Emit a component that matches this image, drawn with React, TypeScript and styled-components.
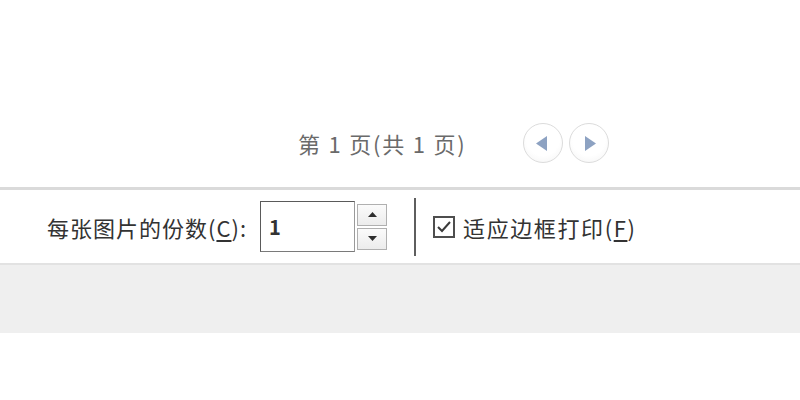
import React from "react";
import styled, { createGlobalStyle } from "styled-components";

const Global = createGlobalStyle`
  html, body { margin: 0; padding: 0; background: #ffffff; }
  body { font-family: "Noto Sans CJK SC", "Noto Sans", sans-serif; }
`;

const Page = styled.div`
  width: 800px;
  height: 400px;
  display: flex;
  flex-direction: column;
  overflow: hidden;
`;

const PreviewArea = styled.div`
  height: 187px;
  display: flex;
  align-items: flex-end;
  padding-left: 298px;
  box-sizing: border-box;
  padding-bottom: 24px;
`;

const Pager = styled.div`
  display: flex;
  align-items: center;
`;

const PageInfo = styled.span`
  font-size: 22px;
  color: #6a6a6a;
  line-height: 40px;
  margin-right: 56px;
  letter-spacing: 1.8px;
`;

const NavButton = styled.div`
  width: 38px;
  height: 38px;
  border-radius: 50%;
  border: 1px solid #dcdcdc;
  background: radial-gradient(circle at 50% 40%, #ffffff 55%, #f2f2f2 100%);
  display: flex;
  align-items: center;
  justify-content: center;
  margin-right: 6px;
`;

const Rule = styled.div<{ $h: number; $c: string }>`
  height: ${(p) => p.$h}px;
  background: ${(p) => p.$c};
  flex-shrink: 0;
`;

const Toolbar = styled.div`
  height: 73px;
  display: flex;
  align-items: center;
  padding-left: 47px;
  box-sizing: border-box;
`;

const Label = styled.label<{ $ls?: number }>`
  font-size: 22px;
  color: #333333;
  letter-spacing: ${(p) => p.$ls ?? 1}px;
  display: flex;
  align-items: center;
`;

const Key = styled.span`
  text-decoration: underline;
  text-underline-offset: 3px;
`;

const NumberBox = styled.div`
  width: 95px;
  height: 51px;
  box-sizing: border-box;
  border: 1px solid #5a5a5a;
  border-right-color: #9a9a9a;
  border-bottom-color: #7a7a7a;
  margin-left: 13px;
  display: flex;
  align-items: center;
  padding-left: 8px;
  font-size: 20px;
  font-weight: 600;
  color: #333;
`;

const Spinner = styled.div`
  display: flex;
  flex-direction: column;
  gap: 2px;
  margin-left: 2px;
`;

const SpinButton = styled.div`
  width: 30px;
  height: 22px;
  box-sizing: border-box;
  border: 1px solid #b0b0b0;
  background: linear-gradient(#fbfbfb, #ececec);
  display: flex;
  align-items: center;
  justify-content: center;
`;

const Separator = styled.div`
  width: 2px;
  height: 58px;
  background: #5e5e5e;
  margin-left: 27px;
  margin-right: 17px;
`;

const CheckBox = styled.div`
  width: 22px;
  height: 22px;
  box-sizing: border-box;
  border: 2px solid #4e4e4e;
  display: flex;
  align-items: center;
  justify-content: center;
  margin-right: 8px;
`;

const Band = styled.div`
  height: 68px;
  background: #efefef;
`;

const Tri = ({ dir, color, w, h }: { dir: "up" | "down" | "left" | "right"; color: string; w: number; h: number }) => {
  const pts =
    dir === "up"
      ? `0,${h} ${w / 2},0 ${w},${h}`
      : dir === "down"
      ? `0,0 ${w},0 ${w / 2},${h}`
      : dir === "left"
      ? `${w},0 ${w},${h} 0,${h / 2}`
      : `0,0 ${w},${h / 2} 0,${h}`;
  return (
    <svg width={w} height={h} viewBox={`0 0 ${w} ${h}`}>
      <polygon points={pts} fill={color} />
    </svg>
  );
};

const Nudge = styled.span<{ $x: number }>`
  display: flex;
  margin-left: ${(p) => p.$x}px;
`;

export default function App() {
  return (
    <Page>
      <Global />
      <PreviewArea>
        <Pager>
          <PageInfo>第 1 页(共 1 页)</PageInfo>
          <NavButton>
            <Nudge $x={-3}>
              <Tri dir="left" color="#8da2c2" w={11} h={15} />
            </Nudge>
          </NavButton>
          <NavButton>
            <Nudge $x={3}>
              <Tri dir="right" color="#8da2c2" w={11} h={15} />
            </Nudge>
          </NavButton>
        </Pager>
      </PreviewArea>
      <Rule $h={3} $c="#dadada" />
      <Toolbar>
        <Label>
          每张图片的份数(<Key>C</Key>):
        </Label>
        <NumberBox>1</NumberBox>
        <Spinner>
          <SpinButton>
            <Tri dir="up" color="#2e2e2e" w={9} h={5} />
          </SpinButton>
          <SpinButton>
            <Tri dir="down" color="#2e2e2e" w={9} h={5} />
          </SpinButton>
        </Spinner>
        <Separator />
        <CheckBox>
          <svg width="16" height="14" viewBox="0 0 16 14">
            <polyline points="2,7 6,11 14,2" fill="none" stroke="#3a3a3a" strokeWidth="2" />
          </svg>
        </CheckBox>
        <Label $ls={1.6}>
          适应边框打印(<Key>F</Key>)
        </Label>
      </Toolbar>
      <Rule $h={2} $c="#e2e2e2" />
      <Band />
    </Page>
  );
}
